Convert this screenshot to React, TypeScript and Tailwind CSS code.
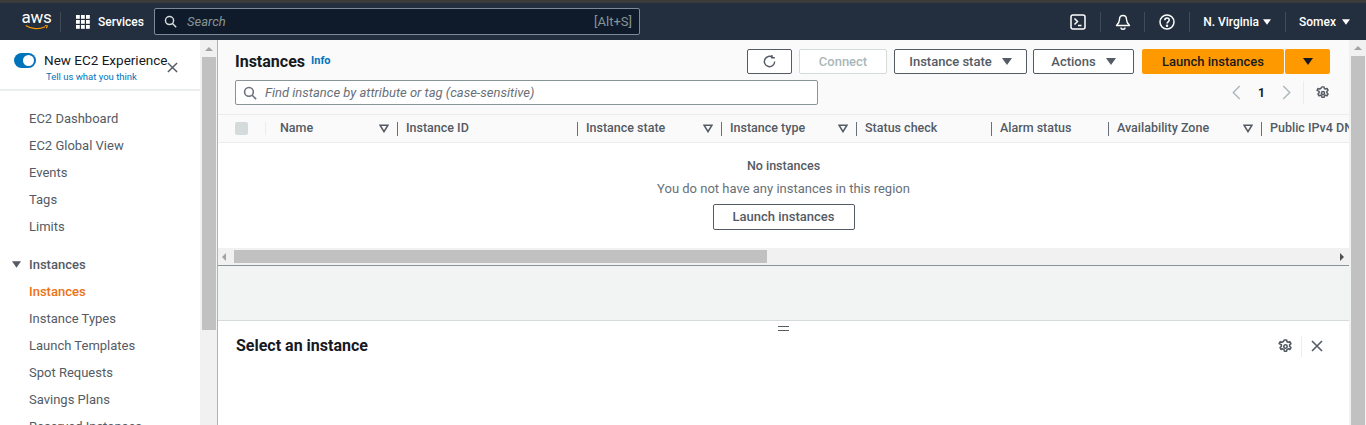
import React from "react";

const font = { fontFamily: '"Roboto", "Liberation Sans", sans-serif' };

function Caret({ className = "" }: { className?: string }) {
  return (
    <svg viewBox="0 0 10 7" className={className} fill="currentColor">
      <path d="M0 0h10L5 7z" />
    </svg>
  );
}
function FilterCaret() {
  return (
    <svg viewBox="0 0 10 9" className="w-[10px] h-[9px] text-[#545b64]" fill="none" stroke="currentColor" strokeWidth="1.6">
      <path d="M1 1.2h8L5 7.6z" />
    </svg>
  );
}
function Gear({ className = "" }: { className?: string }) {
  return (
    <svg viewBox="0 0 16 16" className={className} fill="none" stroke="currentColor" strokeWidth="1.7">
      <circle cx="8" cy="8" r="1.8" />
      <path d="M6.8 1h2.4l.4 1.9 1.2.6 1.8-.7 1.2 2.1-1.4 1.3v1.6l1.4 1.3-1.2 2.1-1.8-.7-1.2.6-.4 1.9H6.800l-.4-1.900-1.200-.6-1.800.7-1.200-2.100 1.400-1.300V6.200L1.200 4.900l1.200-2.100 1.800.7 1.200-.6z" strokeLinejoin="round" />
    </svg>
  );
}
function Close({ className = "" }: { className?: string }) {
  return (
    <svg viewBox="0 0 12 12" className={className} fill="none" stroke="currentColor" strokeWidth="1.6">
      <path d="M1 1l10 10M11 1L1 11" />
    </svg>
  );
}
function SearchIcon({ className = "" }: { className?: string }) {
  return (
    <svg viewBox="0 0 16 16" className={className} fill="none" stroke="currentColor" strokeWidth="1.8">
      <circle cx="6.8" cy="6.800" r="5" />
      <path d="M10.500 10.500L15 15" />
    </svg>
  );
}
function VThumbBar({ thumb }: { thumb: string }) {
  return (
    <div className="w-[17px] shrink-0 bg-[#f1f1f1] flex flex-col items-center">
      <div className="h-[17px] flex items-center justify-center">
        <div className="w-0 h-0 border-x-[4px] border-x-transparent border-b-[4px] border-b-[#a3a3a3]" />
      </div>
      <div className={`w-[14px] bg-[#c1c1c1] ${thumb}`} />
    </div>
  );
}

function TopNav() {
  return (
    <header className="h-[37px] bg-[#232f3e] flex items-center text-white shrink-0">
      <div className="w-[47px] ml-[13px] flex flex-col items-center leading-none">
        <span className="text-[17px] leading-[15px] tracking-[-0.3px] -mt-[3px]">aws</span>
        <svg viewBox="0 0 30 8" className="w-[24px] h-[7px] -mt-[1px]" fill="none" stroke="#f90" strokeWidth="1.4">
          <path d="M1 1.500C8 6.500 18 6.500 25 3M25 1.500l3 .5-1.500 3" />
        </svg>
      </div>
      <div className="w-px h-[20px] bg-[#414b58]" />
      <svg viewBox="0 0 14 14" className="w-[14px] h-[14px] ml-[15px]" fill="white">
        {[0, 5, 10].map((y) =>
          [0, 5, 10].map((x) => <rect key={`${x}-${y}`} x={x} y={y} width="3.800" height="3.800" />)
        )}
      </svg>
      <span className="ml-[8px] text-[12px] font-medium w-[41px] whitespace-nowrap">Services</span>
      <div className="ml-[15px] w-[486px] h-[27px] bg-[#0f1b2a] border border-[#7d8998] rounded-[2px] flex items-center pl-[9px] pr-[7px]">
        <SearchIcon className="w-[13px] h-[13px] text-[#d5dbdb]" />
        <span className="ml-[10px] text-[13px] italic text-[#879596]">Search</span>
        <span className="ml-auto text-[13px] text-[#879596]">[Alt+S]</span>
      </div>
      <div className="ml-auto flex items-center h-full">
        <svg viewBox="0 0 16 16" className="w-[16px] h-[16px]" fill="none" stroke="white" strokeWidth="1.500">
          <rect x="1" y="1" width="14" height="14" rx="2" />
          <path d="M4.500 4.500L7.500 7.500 4.500 10.500M8 11.500h3.500" />
        </svg>
        <div className="w-px h-[20px] bg-[#414b58] ml-[14px]" />
        <svg viewBox="0 0 16 16" className="w-[16px] h-[16px] ml-[14px]" fill="none" stroke="white" strokeWidth="1.400">
          <path d="M8 1.500c-2.500 0-3.500 2-3.500 4 0 2.500-1 4-3 6h13c-2-2-3-3.500-3-6 0-2-1-4-3.500-4z" strokeLinejoin="round" />
          <path d="M6 13.500a2 1.800 0 0 0 4 0" />
        </svg>
        <div className="w-px h-[20px] bg-[#414b58] ml-[13px]" />
        <svg viewBox="0 0 16 16" className="w-[16px] h-[16px] ml-[14px]" fill="none" stroke="white" strokeWidth="1.500">
          <circle cx="8" cy="8" r="7" />
          <path d="M5.800 6.200c0-3 4.400-3 4.400-.2 0 1.800-2.200 1.800-2.200 3.600" />
          <circle cx="8" cy="11.800" r=".5" fill="white" />
        </svg>
        <div className="w-px h-[20px] bg-[#414b58] ml-[14px]" />
        <span className="ml-[13px] text-[12px] font-medium">N. Virginia</span>
        <Caret className="w-[8px] h-[6px] ml-[4px]" />
        <div className="w-px h-[20px] bg-[#414b58] ml-[14px]" />
        <span className="ml-[13px] text-[12px] font-medium">Somex</span>
        <Caret className="w-[8px] h-[6px] ml-[6px] mr-[16px]" />
      </div>
    </header>
  );
}

function NavItem({ label, active }: { label: string; active?: boolean }) {
  return (
    <div className={`h-[27px] pl-[29px] flex items-center text-[13px] ${active ? "text-[#ec7211] font-medium" : "text-[#545b64]"}`}>
      {label}
    </div>
  );
}

function Sidebar() {
  return (
    <aside className="w-[200px] shrink-0 bg-white overflow-hidden">
      <div className="h-[51px] border-b-2 border-[#eaeded] relative flex">
        <div className="ml-[14px] mt-[13px] w-[22px] h-[15px] rounded-full bg-[#0073bb] relative shrink-0">
          <div className="absolute right-[2px] top-[2px] w-[11px] h-[11px] rounded-full bg-white" />
        </div>
        <div className="ml-[8px] mt-[11px] flex flex-col items-start">
          <span className="text-[13.500px] leading-[18px] text-[#16191f] whitespace-nowrap">New EC2 Experience</span>
          <span className="text-[9.500px] leading-[14px] mt-[1px] ml-[2px] text-[#0073bb] whitespace-nowrap">Tell us what you think</span>
        </div>
        <Close className="absolute left-[167px] top-[22px] w-[11px] h-[11px] text-[#545b64]" />
      </div>
      <div className="pt-[14px]">
        <NavItem label="EC2 Dashboard" />
        <NavItem label="EC2 Global View" />
        <NavItem label="Events" />
        <NavItem label="Tags" />
        <NavItem label="Limits" />
      </div>
      <div className="mt-[11px] h-[27px] flex items-center pl-[12px] text-[13px] font-medium text-[#545b64]">
        <Caret className="w-[9px] h-[7px] mr-[8px]" />
        Instances
      </div>
      <NavItem label="Instances" active />
      <NavItem label="Instance Types" />
      <NavItem label="Launch Templates" />
      <NavItem label="Spot Requests" />
      <NavItem label="Savings Plans" />
      <NavItem label="Reserved Instances" />
    </aside>
  );
}

function Btn({ children, className = "" }: { children: React.ReactNode; className?: string }) {
  return (
    <div className={`h-[25px] border border-[#545b64] rounded-[2px] bg-white flex items-center justify-center text-[13px] font-medium text-[#545b64] ${className}`}>
      {children}
    </div>
  );
}

const columns: { label: string; w: string; filter?: boolean; pad?: string }[] = [
  { label: "Name", w: "w-[126px]", filter: true },
  { label: "Instance ID", w: "w-[180px]" },
  { label: "Instance state", w: "w-[144px]", filter: true },
  { label: "Instance type", w: "w-[135px]", filter: true },
  { label: "Status check", w: "w-[135px]" },
  { label: "Alarm status", w: "w-[117px]" },
  { label: "Availability Zone", w: "w-[153px]", filter: true },
  { label: "Public IPv4 DNS", w: "w-[120px]" },
];

function Main() {
  return (
    <main className="flex-1 min-w-0 flex flex-col border-l border-[#aab7b8] bg-[#f2f3f3] overflow-hidden">
      <div className="h-[74px] bg-[#fafafa] relative flex flex-col pl-[17px] pr-[19px] shrink-0">
        <div className="flex items-center h-[25px] mt-[9px]">
          <span className="text-[16px] font-bold text-[#16191f] leading-none">Instances</span>
          <span className="ml-[6px] text-[11px] font-bold text-[#0073bb]">Info</span>
          <div className="ml-auto flex items-center">
            <Btn className="w-[45px]">
              <svg viewBox="0 0 16 16" className="w-[15px] h-[15px]" fill="none" stroke="#545b64" strokeWidth="1.500">
                <path d="M13.500 8a5.500 5.500 0 1 1-2.200-4.400" />
                <path d="M10.500 1v3h3.200" />
              </svg>
            </Btn>
            <Btn className="w-[88px] ml-[7px] !border-[#d5dbdb] !text-[#aab7b8]">Connect</Btn>
            <Btn className="w-[133px] ml-[7px]">
              Instance state
              <Caret className="w-[10px] h-[7px] ml-[10px]" />
            </Btn>
            <Btn className="w-[101px] ml-[6px]">
              Actions
              <Caret className="w-[10px] h-[7px] ml-[10px]" />
            </Btn>
            <div className="ml-[8px] w-[142px] h-[25px] bg-[#ff9900] rounded-[2px] flex items-center justify-center text-[13px] font-medium text-[#16191f]">
              Launch instances
            </div>
            <div className="ml-px w-[45px] h-[25px] bg-[#ff9900] rounded-[2px] flex items-center justify-center text-[#16191f]">
              <Caret className="w-[10px] h-[7px]" />
            </div>
          </div>
        </div>
        <div className="flex items-center h-[25px] mt-[6px]">
          <div className="w-[583px] h-[25px] bg-white border border-[#879596] rounded-[2px] flex items-center pl-[7px]">
            <SearchIcon className="w-[14px] h-[14px] text-[#687078]" />
            <span className="ml-[8px] text-[13px] italic text-[#687078]">Find instance by attribute or tag (case-sensitive)</span>
          </div>
          <div className="ml-auto flex items-center">
            <svg viewBox="0 0 8 14" className="w-[9px] h-[15px]" fill="none" stroke="#aab7b8" strokeWidth="1.300"><path d="M7 1L1 7l6 6" /></svg>
            <span className="ml-[17px] text-[12px] font-bold text-[#16191f]">1</span>
            <svg viewBox="0 0 8 14" className="ml-[17px] w-[9px] h-[15px]" fill="none" stroke="#aab7b8" strokeWidth="1.300"><path d="M1 1l6 6-6 6" /></svg>
            <div className="ml-[12px] w-px h-[23px] bg-[#eaeded]" />
            <Gear className="ml-[12px] w-[14px] h-[14px] text-[#545b64]" />
          </div>
        </div>
      </div>
      <div className="h-[29px] bg-[#fafafa] border-y border-[#eaeded] flex items-center overflow-hidden shrink-0">
        <div className="w-[48px] shrink-0 flex items-center pl-[17px]">
          <div className="w-[13px] h-[13px] rounded-[2px] bg-[#d5dbdb]" />
          <div className="ml-[17px] w-px h-[13px] bg-[#eaeded]" />
        </div>
        <div className="flex ml-[14px]">
          {columns.map((c) => (
            <div key={c.label} className={`${c.w} shrink-0 flex items-center h-[14px] pr-[8px] mr-0 text-[12.500px] font-medium text-[#545b64] whitespace-nowrap`}>
              <span>{c.label}</span>
              <div className="ml-auto flex items-center gap-[8px]">
                {c.filter ? <FilterCaret /> : null}
                <div className="w-px h-[14px] bg-[#687078]" />
              </div>
            </div>
          ))}
        </div>
      </div>
      <div className="h-[105px] bg-white flex flex-col items-center shrink-0">
        <span className="mt-[15px] text-[12.500px] leading-[16px] font-medium text-[#545b64]">No instances</span>
        <span className="mt-[7px] text-[13px] leading-[16px] text-[#687078]">You do not have any instances in this region</span>
        <Btn className="w-[142px] h-[26px] mt-[7px] !border-[#545b64]">Launch instances</Btn>
      </div>
      <div className="h-[17px] bg-[#f1f1f1] flex items-center relative shrink-0">
        <div className="w-0 h-0 ml-[4px] border-y-[4px] border-y-transparent border-r-[4px] border-r-[#a3a3a3]" />
        <div className="ml-[8px] w-[533px] h-[13px] bg-[#c1c1c1]" />
        <div className="ml-auto mr-[5px] w-0 h-0 border-y-[4px] border-y-transparent border-l-[4px] border-l-[#505050]" />
      </div>
      <div className="h-[55px] border-t border-[#879596] shrink-0" />
      <div className="flex-1 bg-white border-t border-[#d5dbdb] relative flex pl-[18px] pr-[26px] pt-[15px]">
        <div className="absolute left-[560px] top-[5px] w-[11px] h-[5px] border-y border-[#545b64]" />
        <span className="text-[16px] leading-[20px] font-bold text-[#16191f]">Select an instance</span>
        <div className="ml-auto flex items-center h-[20px]">
          <Gear className="w-[15px] h-[15px] text-[#545b64]" />
          <div className="ml-[8px] w-px h-[21px] bg-[#eaeded]" />
          <Close className="ml-[9px] w-[12px] h-[12px] text-[#545b64]" />
        </div>
      </div>
    </main>
  );
}

export default function App() {
  return (
    <div className="h-[425px] overflow-hidden flex flex-col bg-white" style={font}>
      <div className="h-[3px] bg-[#3b3b3b] shrink-0" />
      <TopNav />
      <div className="flex flex-1 min-h-0">
        <Sidebar />
        <VThumbBar thumb="h-[273px]" />
        <Main />
        <VThumbBar thumb="h-[380px]" />
      </div>
    </div>
  );
}
